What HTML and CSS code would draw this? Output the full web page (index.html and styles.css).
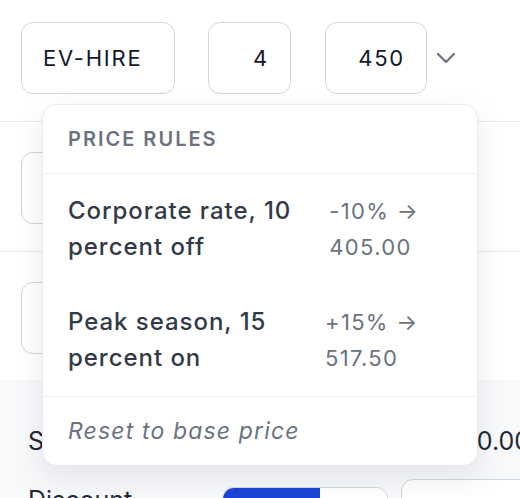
FILE: index.html
```html
<!DOCTYPE html>
<html lang="en">
<head>
    <meta charset="UTF-8">
    <meta name="viewport" content="width=device-width, initial-scale=1.0">
    <title>Line item pricing</title>
    <link rel="stylesheet" href="styles.css">
</head>
<body>
    <div class="editor">
        <div class="line-row first">
            <div class="field code">EV-HIRE</div>
            <div class="field qty">4</div>
            <div class="field price">450</div>
            <svg class="chevron" width="20" height="12" viewBox="0 0 20 12">
                <path d="M2 2 L10 10 L18 2" fill="none" stroke="#6b7280" stroke-width="2.2" stroke-linecap="round" stroke-linejoin="round"/>
            </svg>
        </div>

        <div class="line-row">
            <div class="field wide"></div>
        </div>

        <div class="line-row last">
            <div class="field wide"></div>
        </div>

        <div class="summary">
            <div class="summary-row">
                <span>Subtotal</span>
                <span class="amount">1,800.00</span>
            </div>
            <div class="summary-row">
                <span>Discount</span>
                <div class="toggle">
                    <span class="toggle-on">%</span>
                    <span class="toggle-off">$</span>
                </div>
                <div class="field discount"></div>
            </div>
        </div>

        <div class="price-menu">
            <div class="menu-head">Price rules</div>
            <div class="rule">
                <div class="rule-name">Corporate rate, 10 percent off</div>
                <div class="rule-meta">-10% → 405.00</div>
            </div>
            <div class="rule">
                <div class="rule-name">Peak season, 15 percent on</div>
                <div class="rule-meta">+15% → 517.50</div>
            </div>
            <div class="menu-foot">Reset to base price</div>
        </div>
    </div>
</body>
</html>
```

FILE: styles.css
```css
* {
    margin: 0;
    padding: 0;
    box-sizing: border-box;
}

body {
    font-family: Inter, 'Noto Sans', sans-serif;
    background: white;
    color: #111827;
    width: 520px;
    height: 498px;
    overflow: hidden;
}

.editor {
    position: relative;
    width: 520px;
    height: 498px;
    overflow: hidden;
}

.line-row {
    display: flex;
    align-items: center;
    padding: 30px 21px 27px;
    border-bottom: 1px solid #e5e7eb;
}

.line-row.first {
    padding-top: 22px;
}

.line-row.last {
    border-bottom: none;
    padding-bottom: 26px;
}

.field {
    height: 72px;
    border: 1.5px solid #d1d5db;
    border-radius: 12px;
    background: white;
    font-size: 22px;
    letter-spacing: 0.08em;
    display: flex;
    align-items: center;
    padding: 0 21px;
    flex-shrink: 0;
}

.field.code {
    width: 154px;
}

.field.qty {
    width: 83px;
    margin-left: 33px;
    justify-content: flex-end;
}

.field.price {
    width: 102px;
    margin-left: 34px;
    justify-content: flex-end;
}

.field.wide {
    width: 300px;
}

.chevron {
    margin-left: 9px;
}

.summary {
    background: #f8f9fb;
    padding: 44px 28px 0;
    height: 130px;
}

.summary-row {
    display: flex;
    align-items: flex-start;
    font-size: 25px;
    line-height: 34px;
    color: #1f2937;
    height: 34px;
    white-space: nowrap;
}

.summary-row + .summary-row {
    margin-top: 25px;
}

.amount {
    margin-left: auto;
    margin-right: -38px;
}

.toggle {
    display: flex;
    flex-shrink: 0;
    margin-left: 90px;
    margin-top: 4px;
    height: 44px;
    border: 1.5px solid #d1d5db;
    border-radius: 12px;
    overflow: hidden;
    font-size: 18px;
    line-height: 24px;
}

.toggle-on {
    width: 97px;
    background: #1d46d8;
    color: white;
    text-align: center;
    padding-top: 13px;
}

.toggle-off {
    width: 67px;
    background: white;
    text-align: center;
    padding-top: 13px;
}

.field.discount {
    width: 160px;
    margin-left: 13px;
    margin-top: -4px;
}

.price-menu {
    position: absolute;
    left: 42px;
    top: 104px;
    width: 436px;
    background: white;
    border: 1px solid #e8eaee;
    border-radius: 14px;
    box-shadow: 0 12px 32px rgba(17, 24, 39, 0.09);
}

.menu-head {
    padding: 20px 25px;
    line-height: 28px;
    font-size: 20px;
    font-weight: 600;
    letter-spacing: 0.1em;
    text-transform: uppercase;
    color: #6b7280;
    border-bottom: 1px solid #eef0f3;
}

.rule {
    display: flex;
    gap: 10px;
    padding: 19px 25px 20px;
    line-height: 36px;
}

.rule-name {
    font-size: 24px;
    font-weight: 500;
    letter-spacing: 0.04em;
    color: #323a48;
}

.rule-meta {
    font-size: 22px;
    letter-spacing: 0.06em;
    color: #6b7280;
}

.menu-foot {
    border-top: 1px solid #eef0f3;
    padding: 17px 25px;
    line-height: 34px;
    font-size: 23px;
    font-style: italic;
    letter-spacing: 0.05em;
    color: #6b7280;
}
```
